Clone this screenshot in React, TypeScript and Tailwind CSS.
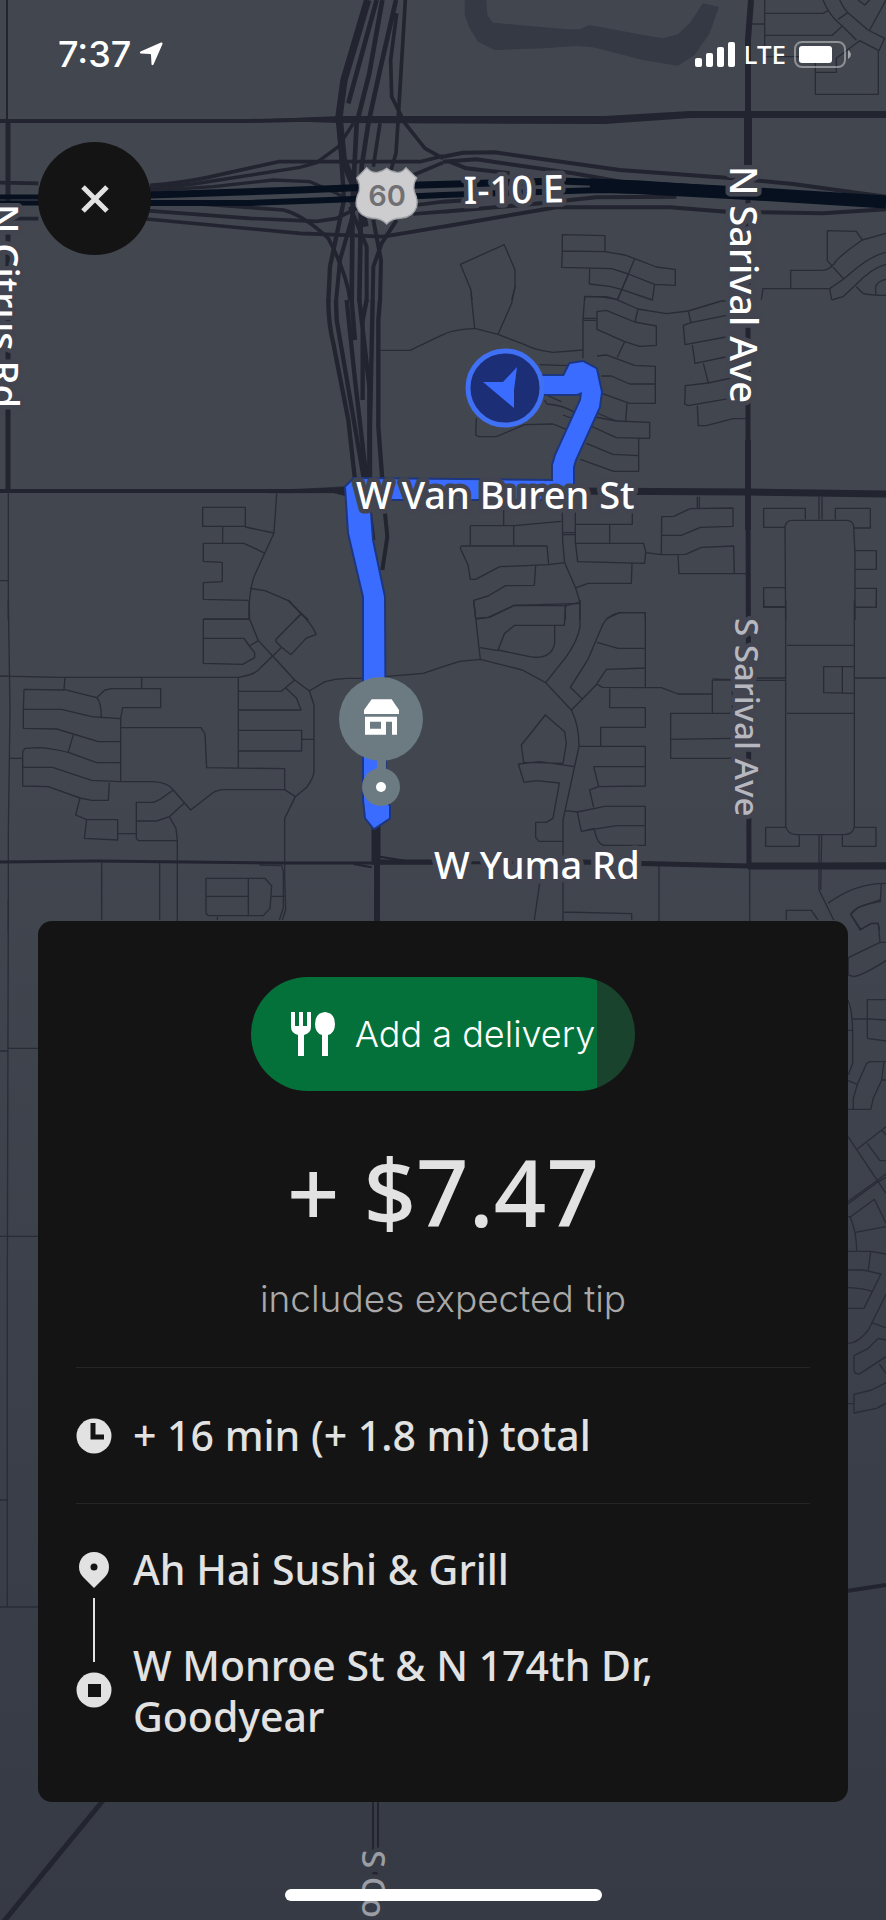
import type { ReactNode } from "react";

const ROAD = "#22242f";
const HALO = "#42454f";

// Map blocks are drawn on a 3x grid, each one placed by its own origin
function Block({ x, y, children }: { x: number; y: number; children: ReactNode }) {
  return <g transform={`translate(${x} ${y}) scale(0.33333)`}>{children}</g>;
}

function NeighborhoodStreets() {
  return (
    <g fill="none" stroke="#292c37" strokeLinejoin="round" strokeWidth="4">
      <Block x={443} y={0}>
        <path d="M965 0V170H1090M965 40H1140L1155 32M965 106H1168L1198 78M927 72H965M1140 0Q1160 50 1198 78L1240 120M1190 0Q1205 30 1215 38L1185 58M1215 38L1275 90M1245 0L1265 15L1280 0M1329 0L1280 90M1275 90L1325 115L1308 152L1250 122L1180 175V217H1117V170M1117 217V283H1306V152" />
        <path d="M87 900L84 870L52 793L184 734L216 810V862L206 900" />
        <path d="M358 753V704L486 707V753M358 753L356 802L506 806L556 822L575 776L545 765L486 755L358 753M575 776L640 801L697 808V856L635 853L556 822L523 900M440 806L439 852L500 859L535 868L628 900L635 853M425 900V889L480 891L520 898" />
        <path d="M1329 700L1258 720L1240 694L1153 692V782L1202 837M1258 720Q1200 760 1180 782Q1165 808 1140 811H1043V865M1329 757Q1290 765 1240 805L1202 837L1160 866H960L955 900M1160 866L1166 900M1329 793Q1285 805 1240 853L1200 890L1166 900M1240 860L1260 880Q1280 886 1329 886M1298 886V860Q1305 842 1329 838" />
      </Block>

      <Block x={443} y={220}>
        <path d="M0 345Q20 330 95 325L84 220M216 200L206 250L165 343M95 325L165 343L245 374Q280 392 330 397L420 390M425 230H490L520 238L585 267L670 281L736 273L835 243H915M425 230L420 300V415M420 295H460M420 301H460M523 240L556 163M290 434L350 436L400 437M355 545L310 525M304 540L312 552Q360 555 400 580L520 603" />
        <path d="M462 275L490 271L575 306L640 318V376L590 379L545 365L462 328ZM585 267L576 306M545 365L523 412M462 408L490 405L575 436L637 439V550H560L470 518M475 468H505L560 492H637M552 550L548 602M440 570L520 603L620 607V655L520 653L430 612L360 585M587 655V754H512L412 718M587 707L510 703L430 670M100 595L98 645L108 650H160L245 614L330 612L370 628" />
        <path d="M736 273L744 308L865 283M744 308L721 316L726 374L865 348M748 375L756 430L862 408M781 430L796 489L865 474M796 489L727 497L725 552L735 557L862 535M763 557L766 617H790L870 596H910" />
        <path d="M182 870V917M82 917H214L355 904M82 917V975M212 917V975M55 978H312L317 1034L170 1040L98 1078H82L75 1035L52 985ZM278 1037L274 1096L188 1097L135 1128L92 1141L98 1195L140 1192L213 1156L370 1157L408 1147M367 1155V1200M358 870L359 965L365 1028L317 1034M365 1028L398 1104L411 1147V1200M397 870V965L404 1025L605 1030L608 995L602 970H397M358 938H397M358 944H397M397 913H568V880M500 913V970M608 998L655 1004L728 1003L775 982L872 978L874 1061M655 1004L656 890L692 889L742 866L870 864V919L772 922L715 946H656M705 1003L708 1061H912M567 1031L565 1090H435L398 1104M607 1200V1178H530L492 1195M763 830V864M769 830V864M1128 830V898M1137 830V898" />
        <path d="M962 865H1087V898M962 865V922H1026M1177 898V865H1282V924H1234M1028 1200L1026 920Q1030 900 1048 901H1212Q1230 902 1232 920L1236 1000V1200M1236 992H1300V1048H1238M1026 1103H962V1162H1028M1236 1105H1300V1162H1236" />
      </Block>

      <Block x={0} y={300}>
        <path d="M1142 151H1230L1329 104M25 575V960M0 842H25M608 622H736V679H608ZM668 679V729M736 681L822 699M830 580L822 699L762 830Q745 880 747 960M795 760L732 730H610V784L667 787V845L610 848V898L744 901M750 865L795 872L865 902L925 960M905 940L885 960M610 957H747" />
      </Block>

      <Block x={0} y={600}>
        <path d="M25 0L30 330L25 700V1000M0 228L175 232H715Q765 225 780 205L845 142L828 125V118L903 42Q935 70 948 103L918 115L873 164L845 142M865 0L903 42M747 0L749 58L775 122L818 168L884 240L928 273L942 315V515Q940 535 920 562L886 590L854 655V830L857 930L847 960M884 240L844 274H715M858 265L890 295L903 330H715M715 391H905V453H715M905 418H942M928 273L975 245Q1005 236 1040 235H1092M1153 230L1270 220L1329 200M715 232V503M748 58H610V190L728 193L764 173V158L748 138L732 115H610M748 138L775 122" />
        <path d="M195 233L192 268L290 293L315 270L335 266H482V323H368L362 355V545M290 293Q304 305 304 355M425 233V266M72 268L192 270M72 268L70 328V385L170 387L220 402L295 425H361M70 328H185L275 350L361 356M220 404L205 455M75 445L115 443Q145 443 205 457L290 488H361M75 445L68 455V558L145 560L240 594L275 601H325L328 548M68 502H158L275 541L361 545H460Q505 548 520 570L572 630L630 585Q645 570 672 569H854V506L620 503L615 402L603 383H361M854 569L886 590M240 594L227 645L260 659H353V720L253 715L260 659M353 701H409M520 570L480 598L460 607H409V715L415 722H532M409 663H470L508 650L552 610M508 650L528 685L532 722V970M30 475H68M305 788V960M479 788V960M618 835H795L815 858L810 925L790 947H625L618 940ZM745 835V945M618 889H745M815 889H857M652 950V960M778 795L845 797L850 815V925L838 960" />
      </Block>

      <Block x={443} y={600}>
        <path d="M92 0L112 178L50 184L0 200M100 57L135 52L215 16L410 10L411 80Q405 120 370 170L308 248M411 10V0M368 14L364 76H215L185 100L165 150L260 170Q325 180 335 130V78M112 143L165 152M112 178L238 210L308 248L385 330Q408 375 408 439L360 660V970M385 330L418 297L382 262L435 178L480 72Q500 40 535 38H607V262M462 127L525 145H607M607 204L490 208L462 250M418 297L462 252L478 262L655 263L705 282H808M500 262V323H607V382H473V439M408 439H607V558L467 560L452 500H607M467 560L440 570L452 622M307 345L365 395L370 430L360 490L242 487L235 435ZM226 492L290 485L395 500M226 492L243 547L280 542L349 549L330 655L310 667H278V712L288 724H361M368 632L403 636L485 619H607V736H485Q462 735 454 685L415 694L403 636M415 694L520 677H607M274 960L290 850M359 936L566 941V960M648 795V970M920 800V970M808 240L868 238V340H683V475H860L868 470M808 240V340M683 418L868 415M808 237L868 240M940 234H1028M940 241H1028M1028 0V680Q1035 703 1060 704H1205Q1230 703 1234 680V0M1032 136H1234M1032 340H1234M1142 200H1234V280L1142 278ZM1198 200V278M1234 234H1329M962 0V20H1028M1234 22H1300V0M1030 682H968V739H1069V704M1198 704V739H1299V682H1234M1128 704V870L1172 960M1136 704L1133 870M1030 960V931H1105L1125 960M1155 910Q1235 850 1329 850M1315 850L1312 905Q1240 915 1223 942L1255 990M1250 990L1285 970H1305L1310 990" />
      </Block>

      <Block x={780} y={900}>
        <path d="M300 0L235 22L212 43L240 90L273 71L295 70L300 127L205 173V225L222 230Q250 225 318 182M300 127H318M262 415V299H318M262 415L318 423M218 357H270L318 360M204 300Q218 335 218 400V490L205 525M204 391H218M204 542L232 553L220 595V628H272L280 595L305 540H318M232 553L260 490L270 485H318M312 485L305 540M204 628H220M204 710L318 880M232 747L318 680M262 730L300 782H318M305 690L318 705M204 905L280 850L318 822M204 912L290 848L318 832M210 952L283 898L318 970M204 950H210Q230 995 230 1054M226 997L318 980M204 1054H272L318 1062M272 1054L265 1110M204 1110H250L303 1122L252 1225H204M204 1163Q250 1165 278 1175M318 1183L265 1290Q235 1330 204 1330M275 1268L318 1284M318 1320L295 1315L265 1345L222 1367V1412Q225 1424 240 1421L318 1370M298 1392L318 1420M318 1448L275 1470L222 1483V1539L290 1525L318 1510M204 1511H222" />
      </Block>

      <Block x={0} y={900}>
        <path d="M25 0L22 1110V2121M0 453H25M25 445H114M0 1009H114M0 1800H22M0 2121H114" />
      </Block>
    </g>
  );
}

function MainRoads() {
  return (
    <g fill="none" stroke={ROAD} strokeLinejoin="round">
      <path d="M7 0V120" strokeWidth="2" />
      <path d="M8 120V490" strokeWidth="5" />
      <path d="M0 121H250L340 119" strokeWidth="4" />
      <path d="M250 120L340 116H605L690 111H886V118H690L605 124L340 123Z" fill={ROAD} stroke="none" />
      <path d="M751 0L748 40V114" strokeWidth="6" />
      <path d="M748 114V490L749 866" strokeWidth="5" />
      <path d="M748 114V180" strokeWidth="8" />
      <path d="M748 440V530" strokeWidth="6" />
      <path d="M0 491H290L350 490M560 491H748L886 494" strokeWidth="4" />
      <path d="M560 491L748 492L886 494" strokeWidth="7" />
      <path d="M0 862L95 861L280 863H440L600 862L748 866" strokeWidth="3" />
      <path d="M375 862H460M580 862L748 866L886 865" strokeWidth="5" />
      <path d="M748 866H886" strokeWidth="7" />
      <path d="M376 820V865" strokeWidth="9" />
      <path d="M377 860V930" strokeWidth="6" />
      <path d="M373 1790V1860M378 1790V1860" strokeWidth="2" />
      <path d="M375 1872V1880" strokeWidth="5" />
      <path d="M110 1792L0 1926" strokeWidth="5" />
      <path d="M840 1592L886 1585" strokeWidth="4" />

      {/* Interchange ramps */}
      <Block x={0} y={0}>
        <g strokeWidth="13">
          <path d="M0 548L115 550M450 556Q540 550 620 533L835 485H1260L1329 468" strokeWidth="11" />
          <path d="M450 566L580 552L900 502L950 488L1015 440L1060 370" strokeWidth="10" />
          <path d="M450 572L640 560L820 540L930 545L1010 580L1060 610" strokeWidth="10" />
          <path d="M0 656H115M440 632L750 655L950 664L1010 655L1080 620M440 657L900 700L1150 710L1329 680" strokeWidth="11" />
          <path d="M600 612L850 630Q910 645 985 715Q1040 820 1050 900" strokeWidth="11" />
          <path d="M1103 0L1032 240L1017 350L1030 480L1080 600L1095 680" strokeWidth="22" />
          <path d="M1017 370L1032 600L990 800L985 905" />
          <path d="M1130 0L1045 310M1147 0L1108 220L1070 370L1058 600L1055 905" strokeWidth="14" />
          <path d="M1188 0L1140 210L1105 370L1085 500L1078 905" strokeWidth="14" />
          <path d="M1190 40L1172 180L1175 290L1215 370L1275 445L1329 475" strokeWidth="11" />
          <path d="M1216 0L1195 350L1188 460L1170 520M1140 370L1120 500" strokeWidth="11" />
          <path d="M1060 640L1020 780L1008 905M1050 620L1100 740V905M1120 660L1143 780L1140 905M1190 660L1145 730L1120 800L1118 905" strokeWidth="12" />
          <path d="M1240 525L1329 488M1250 615L1329 605M1240 642L1329 635" strokeWidth="11" />
        </g>
      </Block>
      <Block x={443} y={0}>
        <path
          d="M65 0V45L80 85L105 125L155 150L300 145L400 138L450 142L600 180L705 197L755 165L800 100L828 20L780 10L740 70L705 103L660 115L600 105L440 75L410 88H370L150 68L133 45L130 0Z"
          fill="#353944"
          stroke="none"
        />
        <g strokeWidth="12">
          <path d="M0 470L60 458L155 457L530 510L850 533L1050 552L1329 590" />
          <path d="M0 485L100 478L390 520L560 550M20 485L70 505L200 520M0 605L80 600" />
          <path d="M0 635L270 612L460 592L700 590M0 680L340 622H680L850 635L1140 640L1329 628" />
        </g>
      </Block>
      <Block x={0} y={300}>
        <path d="M985 0Q985 70 1000 130L1045 360L1065 540M1008 0L1010 60L1092 540M1040 0L1065 240L1100 540M1055 0L1065 120M1078 0L1108 260V540M1100 0L1088 60V300M1118 0L1110 380V540M1140 0L1135 60V380L1147 540" strokeWidth="13" />
        <path d="M1110 640L1120 720M1155 640L1162 710L1147 810" strokeWidth="12" />
        <path d="M830 572L1040 560V588L1000 578H800" fill={ROAD} strokeWidth="2" />
      </Block>
      <Block x={0} y={600}>
        <path d="M1140 770L1215 782M1060 792L1115 802" strokeWidth="6" />
      </Block>

      {/* Freeway */}
      <g stroke="#06101f">
        <path d="M0 197H40M0 203H40" strokeWidth="5" />
        <path d="M150 195L300 190L420 185L560 181L640 184L740 191" strokeWidth="7" />
        <path d="M150 203H250L330 200L443 195L600 190L740 193" strokeWidth="6" />
        <path d="M590 185L740 193L886 202" strokeWidth="13" />
      </g>
    </g>
  );
}

function Route() {
  return (
    <g>
      <path
        d="M526 376H564L570 364L583 362L596 369L601 392L599 407L575 460L573 467V499H369L372 540L384 597L385 800L389 806V818L374 828L366 818L364 800V597L349 533L346 487L354 479L553 481V465L556 455L581 400L582 392L577 394H526Z"
        fill="#3a6cff"
        stroke="#1d3680"
        strokeWidth="4"
        strokeLinejoin="round"
        paintOrder="stroke"
      />
      <circle cx="505" cy="388" r="37" fill="#1b2e76" stroke="#4070f4" strokeWidth="5" />
      <path d="M483 382L503 382L517 367L514 390V408Z" fill="#3a6cff" />
    </g>
  );
}

function MapLabels() {
  return (
    <g
      className="font-['Noto_Sans',sans-serif] text-[38px] font-medium"
      fill="#fff"
      stroke={HALO}
      strokeWidth="9"
      strokeLinejoin="round"
      paintOrder="stroke"
    >
      <text x="464" y="204" transform="rotate(-1 464 204)">I-10 E</text>
      <text x="356" y="509">W Van Buren St</text>
      <text x="434" y="879">W Yuma Rd</text>
      <text transform="translate(730 166) rotate(90)">N Sarival Ave</text>
      <text transform="translate(-9 204) rotate(90)">N Citrus Rd</text>
      <g className="text-[33px]" fill="#b7b8bf">
        <text transform="translate(735 618) rotate(90)">S Sarival Ave</text>
        <text transform="translate(362 1850) rotate(90)" fill="#9b9da5" stroke="#373b45">S Co</text>
      </g>
    </g>
  );
}

function HighwayShield() {
  return (
    <g>
      <Block x={0} y={0}>
        <path
          d="M1100 503Q1115 520 1132 517Q1148 515 1160 505Q1172 515 1190 517Q1205 520 1218 503L1250 534Q1238 550 1243 575Q1255 600 1250 620Q1240 650 1205 654Q1175 655 1160 672Q1145 655 1115 654Q1080 650 1070 620Q1065 600 1077 575Q1082 550 1070 534Z"
          fill="#cdcdcf"
          stroke="#a2a4aa"
          strokeWidth="4"
        />
      </Block>
      <text x="387" y="206" textAnchor="middle" fill="#707073" className="font-[Inter,sans-serif] text-[29px] font-semibold">
        60
      </text>
    </g>
  );
}

function StoreMarker() {
  return (
    <g>
      <path d="M377 755H386V775H377Z" fill="#6b7b81" />
      <circle cx="381" cy="719" r="42" fill="#6b7b81" />
      <circle cx="381" cy="787" r="19" fill="#6b7b81" />
      <circle cx="381" cy="787" r="5" fill="#fff" />
      <Block x={0} y={600}>
        <path d="M1115 298H1175L1197 330V342H1092V330Z" fill="#fff" />
        <path d="M1095 350H1191V404H1176V365H1158V404H1095ZM1110 365V386H1143V365Z" fill="#fff" fillRule="evenodd" />
      </Block>
    </g>
  );
}

function MapCanvas() {
  return (
    <svg
      className="absolute inset-0 h-full w-full"
      viewBox="0 0 886 1920"
      preserveAspectRatio="xMidYMin slice"
      role="img"
      aria-label="Route map"
    >
      <NeighborhoodStreets />
      <MainRoads />
      <Route />
      <MapLabels />
      <HighwayShield />
      <StoreMarker />
    </svg>
  );
}

function StatusBar() {
  return (
    <header className="flex h-[108px] items-center justify-between pr-[34px] pl-[58px] text-white">
      <div className="flex items-center gap-2">
        <span className="font-[Inter,sans-serif] text-[36px] leading-10 font-medium">7:37</span>
        <svg className="size-6" viewBox="0 0 24 24" fill="currentColor" aria-hidden="true">
          <path d="M22 .5Q24 0 23.5 2L14.500 22.500Q13.500 24 12.500 22.500L12 13Q12 12 11 12L1.500 11.500Q0 10.500 1.500 9.500Z" />
        </svg>
      </div>
      <div className="flex items-center gap-2">
        <svg className="h-[25px] w-[42px]" viewBox="0 0 42 25" fill="currentColor" aria-hidden="true">
          <rect x="1" y="16" width="7" height="9" rx="2" />
          <rect x="12" y="11" width="7" height="14" rx="2" />
          <rect x="23" y="5" width="7" height="20" rx="2" />
          <rect x="34" y="0" width="7" height="25" rx="2" />
        </svg>
        <span className="font-['Noto_Sans',sans-serif] text-[26px] leading-8 font-medium">LTE</span>
        <svg className="h-[27px] w-[58px]" viewBox="0 0 58 27" aria-hidden="true">
          <rect x="1" y="1" width="50" height="25" rx="7" fill="none" stroke="#fff" strokeOpacity="0.4" strokeWidth="2" />
          <rect x="5" y="5" width="33" height="17" rx="3" fill="#fff" />
          <path d="M54 9Q57 11 57 13.500Q57 16 54 18Z" fill="#fff" fillOpacity="0.5" />
        </svg>
      </div>
    </header>
  );
}

function UtensilsIcon() {
  return (
    <svg className="size-11 shrink-0" viewBox="0 0 44 44" fill="currentColor" aria-hidden="true">
      <path d="M0 0H4V14H8V0H12V14H16V0H20V15Q20 21 13 23V44H7V23Q0 21 0 15Z" />
      <path d="M34 0Q44 1 44 12Q44 21 37 23V44H31V23Q24 21 24 12Q24 1 34 0Z" />
    </svg>
  );
}

function ClockIcon() {
  return (
    <svg className="size-9 shrink-0" viewBox="0 0 36 36" aria-hidden="true">
      <circle cx="18" cy="18" r="17.500" fill="#e2e2e2" />
      <path d="M17 5V19H28" fill="none" stroke="#141414" strokeWidth="5" />
    </svg>
  );
}

function PinIcon() {
  return (
    <svg className="size-9 shrink-0" viewBox="0 0 36 36" aria-hidden="true">
      <path d="M18 0C27 0 33 7 33 15C33 20 31 23 28 26L18 36L8 26C5 23 3 20 3 15C3 7 9 0 18 0Z" fill="#e2e2e2" />
      <circle cx="18" cy="15" r="3.500" fill="#141414" />
    </svg>
  );
}

function StopIcon() {
  return (
    <svg className="size-9 shrink-0" viewBox="0 0 36 36" aria-hidden="true">
      <circle cx="18" cy="18" r="17.500" fill="#e2e2e2" />
      <rect x="12" y="12" width="13" height="13" fill="#141414" />
    </svg>
  );
}

function OfferCard() {
  return (
    <main className="mx-[38px] rounded-[14px] bg-[#141414] px-[38px] pt-14 pb-15 font-['Noto_Sans',sans-serif] text-[#e2e2e2]">
      <div className="flex flex-col items-center">
        <button
          type="button"
          className="flex h-[114px] items-center gap-5 rounded-full bg-linear-to-r from-[#04713a] from-90% to-[#19432c] to-90% px-10 text-white"
        >
          <UtensilsIcon />
          <span className="font-[Inter,sans-serif] text-[36px] leading-[48px] font-light">Add a delivery</span>
        </button>
        <h1 className="mt-[51px] text-[92px] leading-[100px] font-medium">+ $7.47</h1>
        <p className="mt-[33px] font-[Inter,sans-serif] text-[37px] leading-[48px] font-light text-[#a9a9a9]">
          includes expected tip
        </p>
      </div>

      <div className="mt-11 flex items-center gap-[21px] border-y border-[#262626] py-[42px]">
        <ClockIcon />
        <p className="text-[41px] leading-[51px] font-medium">+ 16 min (+ 1.8 mi) total</p>
      </div>

      <div className="flex gap-[21px] pt-10">
        <div className="flex flex-col items-center pt-2">
          <PinIcon />
          <div className="my-[10px] h-16 w-[2px] bg-[#e2e2e2]" />
          <StopIcon />
        </div>
        <ol className="flex flex-1 flex-col gap-[45px] text-[41px] leading-[51px] font-medium">
          <li>Ah Hai Sushi &amp; Grill</li>
          <li>
            W Monroe St &amp; N 174th Dr,
            <br />
            Goodyear
          </li>
        </ol>
      </div>
    </main>
  );
}

export default function App() {
  return (
    <div className="relative min-h-screen overflow-hidden bg-linear-to-b from-[#42464f] from-40% to-[#363a44]">
      <MapCanvas />

      <div className="relative flex min-h-screen flex-col">
        <StatusBar />
        <button
          type="button"
          aria-label="Close"
          className="mt-[34px] ml-[38px] flex size-[113px] items-center justify-center rounded-full bg-[#141414]"
        >
          <svg className="size-7" viewBox="0 0 28 28" fill="none" stroke="#e2e2e2" strokeWidth="5" aria-hidden="true">
            <path d="M2 2L26 26M26 2L2 26" />
          </svg>
        </button>

        <div className="flex-1" />
        <OfferCard />

        {/* Home indicator */}
        <div className="flex h-[118px] items-end justify-center pb-[19px]">
          <div className="h-3 w-[317px] rounded-full bg-white" />
        </div>
      </div>
    </div>
  );
}
